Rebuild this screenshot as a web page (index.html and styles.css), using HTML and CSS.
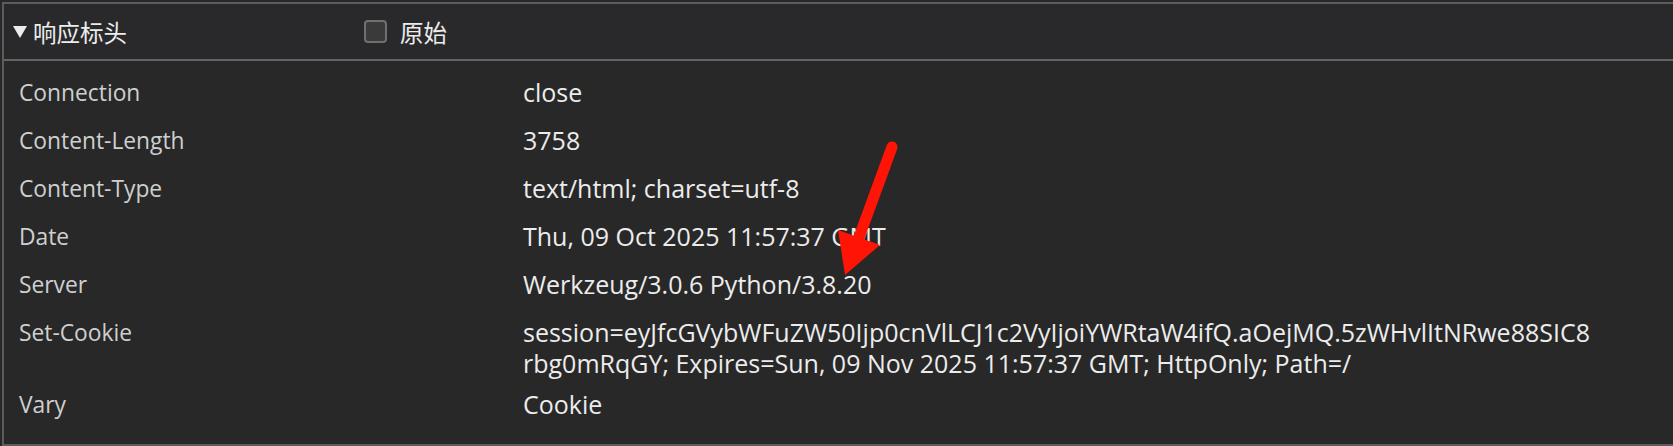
FILE: index.html
```html
<!DOCTYPE html>
<html lang="zh-CN">
<head>
<meta charset="utf-8">
<title>响应标头</title>
<link rel="stylesheet" href="styles.css">
</head>
<body>
<div class="panel">
  <div class="panel-header">
    <div class="toggle">
      <span class="caret"></span>
      <span class="title">响应标头</span>
    </div>
    <label class="raw">
      <span class="checkbox"></span>
      <span class="raw-label">原始</span>
    </label>
  </div>
  <div class="headers">
    <div class="row"><div class="name">Connection</div><div class="value">close</div></div>
    <div class="row"><div class="name">Content-Length</div><div class="value">3758</div></div>
    <div class="row"><div class="name">Content-Type</div><div class="value">text/html; charset=utf-8</div></div>
    <div class="row"><div class="name">Date</div><div class="value">Thu, 09 Oct 2025 11:57:37 GMT</div></div>
    <div class="row"><div class="name">Server</div><div class="value">Werkzeug/3.0.6 Python/3.8.20</div></div>
    <div class="row"><div class="name">Set-Cookie</div><div class="value">session=eyJfcGVybWFuZW50Ijp0cnVlLCJ1c2VyIjoiYWRtaW4ifQ.aOejMQ.5zWHvlItNRwe88SIC8<br>rbg0mRqGY; Expires=Sun, 09 Nov 2025 11:57:37 GMT; HttpOnly; Path=/</div></div>
    <div class="row"><div class="name">Vary</div><div class="value">Cookie</div></div>
  </div>
</div>
<svg class="annotation" width="1673" height="446" viewBox="0 0 1673 446" aria-hidden="true">
  <line x1="892" y1="147" x2="858" y2="240" stroke="#ff1405" stroke-width="11" stroke-linecap="round"/>
  <polygon points="838,230 880,245 845,275" fill="#ff1405"/>
</svg>
</body>
</html>
```
FILE: styles.css
```css
html, body {
  margin: 0;
  padding: 0;
  background: #282828;
}

body {
  width: 1673px;
  height: 446px;
  overflow: hidden;
  position: relative;
  padding: 2px 0 0 2px;
  box-sizing: border-box;
  font-family: "Open Sans", "Noto Sans", "Noto Sans CJK SC", sans-serif;
}

.panel {
  height: 444px;
  box-sizing: border-box;
  border-top: 2px solid #5c5c5c;
  border-left: 2px solid #5c5c5c;
  border-bottom: 2px solid #5c5c5c;
  display: flex;
  flex-direction: column;
}

.panel-header {
  height: 55px;
  flex: none;
  background: #29292b;
  border-bottom: 2px solid #636363;
  display: flex;
  align-items: center;
  padding-left: 9px;
}

.toggle {
  display: flex;
  align-items: center;
  width: 351px;
}

.caret {
  width: 0;
  height: 0;
  border-left: 7px solid transparent;
  border-right: 7px solid transparent;
  border-top: 12px solid #ececec;
  margin-right: 6px;
  margin-top: 1px;
}

.title,
.raw-label {
  font-family: "Noto Sans CJK SC", sans-serif;
  font-size: 23.5px;
  color: #ececec;
  line-height: 30px;
}

.raw {
  display: flex;
  align-items: center;
}

.checkbox {
  width: 23px;
  height: 23px;
  box-sizing: border-box;
  border: 2px solid #6f6f6f;
  border-radius: 4px;
  background: #3a3a3a;
  margin-right: 13px;
}

.headers {
  flex: 1;
  padding-top: 11px;
  padding-left: 15px;
}

.row {
  display: grid;
  grid-template-columns: 504px 1fr;
  align-items: start;
  box-sizing: border-box;
  min-height: 48px;
  padding: 5px 0;
  line-height: 31px;
}

.name {
  font-size: 22.8px;
  color: #cfcfcf;
}

.value {
  font-size: 25px;
  color: #ececec;
}

.annotation {
  position: absolute;
  left: 0;
  top: 0;
  pointer-events: none;
}
```
